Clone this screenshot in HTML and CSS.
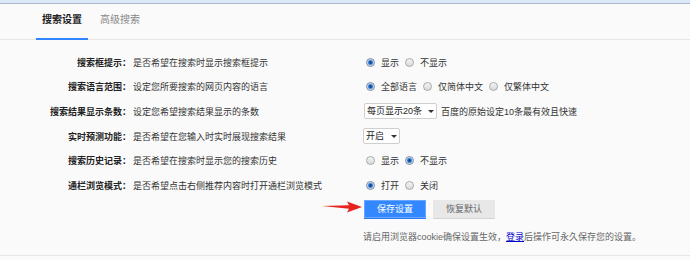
FILE: index.html
```html
<!DOCTYPE html>
<html lang="zh-CN">
<head>
    <meta charset="UTF-8">
    <title>搜索设置</title>
    <link rel="stylesheet" href="styles.css">
</head>
<body>
    <div class="topbar"></div>

    <div class="panel">
        <div class="tabs">
            <a class="tab active">搜索设置</a>
            <a class="tab">高级搜索</a>
        </div>

        <div class="form">
            <div class="row">
                <div class="label">搜索框提示：</div>
                <div class="desc">是否希望在搜索时显示搜索框提示</div>
                <div class="ctrl">
                    <label class="opt"><input type="radio" name="sug" checked>显示</label>
                    <label class="opt"><input type="radio" name="sug">不显示</label>
                </div>
            </div>

            <div class="row">
                <div class="label">搜索语言范围：</div>
                <div class="desc">设定您所要搜索的网页内容的语言</div>
                <div class="ctrl">
                    <label class="opt"><input type="radio" name="lang" checked>全部语言</label>
                    <label class="opt"><input type="radio" name="lang">仅简体中文</label>
                    <label class="opt"><input type="radio" name="lang">仅繁体中文</label>
                </div>
            </div>

            <div class="row">
                <div class="label">搜索结果显示条数：</div>
                <div class="desc">设定您希望搜索结果显示的条数</div>
                <div class="ctrl">
                    <span class="select-wrap wide">
                        <select><option>每页显示20条</option></select>
                    </span>
                    <span class="hint">百度的原始设定10条最有效且快速</span>
                </div>
            </div>

            <div class="row">
                <div class="label">实时预测功能：</div>
                <div class="desc">是否希望在您输入时实时展现搜索结果</div>
                <div class="ctrl">
                    <span class="select-wrap narrow">
                        <select><option>开启</option></select>
                    </span>
                </div>
            </div>

            <div class="row">
                <div class="label">搜索历史记录：</div>
                <div class="desc">是否希望在搜索时显示您的搜索历史</div>
                <div class="ctrl">
                    <label class="opt"><input type="radio" name="his">显示</label>
                    <label class="opt"><input type="radio" name="his" checked>不显示</label>
                </div>
            </div>

            <div class="row">
                <div class="label">通栏浏览模式：</div>
                <div class="desc">是否希望点击右侧推荐内容时打开通栏浏览模式</div>
                <div class="ctrl">
                    <label class="opt"><input type="radio" name="wide" checked>打开</label>
                    <label class="opt"><input type="radio" name="wide">关闭</label>
                </div>
            </div>

            <div class="actions">
                <svg class="arrow" width="42" height="14" viewBox="0 0 42 14">
                    <polygon points="0,5 27,4.3 25,0.5 40,6 25,11.5 27,7.8" fill="#e8231d"/>
                </svg>
                <button class="btn btn-primary">保存设置</button>
                <button class="btn">恢复默认</button>
            </div>

            <p class="note">请启用浏览器cookie确保设置生效，<a href="#">登录</a>后操作可永久保存您的设置。</p>
        </div>
    </div>
</body>
</html>
```

FILE: styles.css
```css
* {
    margin: 0;
    padding: 0;
    box-sizing: border-box;
}

body {
    font-family: "Liberation Sans", "Noto Sans CJK SC", sans-serif;
    font-size: 9px;
    color: #333;
    background: #fafafa;
    width: 690px;
}

.topbar {
    height: 4px;
    background: #dbe8f7;
    border-bottom: 1px solid #a9b8ca;
}

.panel {
    border-bottom: 1px solid #e6e6e6;
}

.tabs {
    display: flex;
    gap: 6px;
    padding-left: 36px;
    border-bottom: 1px solid #e6e6e6;
}

.tab {
    width: 52px;
    text-align: center;
    font-size: 10px;
    line-height: 13px;
    padding: 9px 0 12px;
    color: #888;
    border-bottom: 2px solid transparent;
    margin-bottom: -1px;
}

.tab.active {
    color: #222;
    font-weight: bold;
    border-bottom-color: #3385ff;
}

.form {
    padding: 10px 0 12px;
}

.row {
    display: flex;
    align-items: center;
    height: 24.6px;
}

.label {
    width: 131px;
    text-align: right;
    font-weight: bold;
    color: #222;
}

.desc {
    width: 233px;
    padding-left: 2px;
}

.ctrl {
    display: flex;
    align-items: center;
}

.opt {
    display: flex;
    align-items: center;
    margin-right: 4px;
}

.opt input {
    appearance: none;
    width: 9px;
    height: 9px;
    border-radius: 50%;
    border: 1px solid #a9a9a9;
    background: linear-gradient(#f4f4f4, #d9d9d9);
    margin: 0 6px 0 2px;
}

.opt input:checked {
    border-color: #7b8fa6;
    background: radial-gradient(circle, #0c3f86 0, #1b64c4 1.6px, #8fb6e3 2.6px, #e8e8e8 3.4px);
}

.select-wrap {
    position: relative;
    display: inline-block;
}

.select-wrap select {
    appearance: none;
    height: 16px;
    border: 1px solid #cfcfcf;
    border-radius: 2px;
    background: #fff;
    font-family: inherit;
    font-size: 9px;
    color: #222;
    padding: 0 0 0 2px;
}

.select-wrap.wide select {
    width: 73px;
}

.select-wrap.narrow select {
    width: 37px;
    margin-left: -1px;
}

.select-wrap::after {
    content: "";
    position: absolute;
    top: 7px;
    right: 3px;
    border-top: 3px solid #333;
    border-left: 3px solid transparent;
    border-right: 3px solid transparent;
}

.hint {
    margin-left: 4px;
}

.actions {
    display: flex;
    align-items: center;
    margin-top: 2px;
    padding-left: 322px;
}

.arrow {
    margin-top: -2px;
}

.btn {
    width: 62px;
    height: 19px;
    font-family: inherit;
    font-size: 9px;
    border: none;
    color: #666;
    background: #e8e8e8;
    border-bottom: 1px solid #d4d4d4;
    margin-right: 7px;
}

.btn-primary {
    color: #fff;
    background: #3388ff;
    border-bottom: 1px solid #2d78f4;
    box-shadow: 0 0 0 1px #6aa6ff inset;
}

.note {
    margin-top: 12px;
    padding-left: 363px;
    line-height: 12px;
    color: #666;
}

.note a {
    color: #0000cc;
}
```
